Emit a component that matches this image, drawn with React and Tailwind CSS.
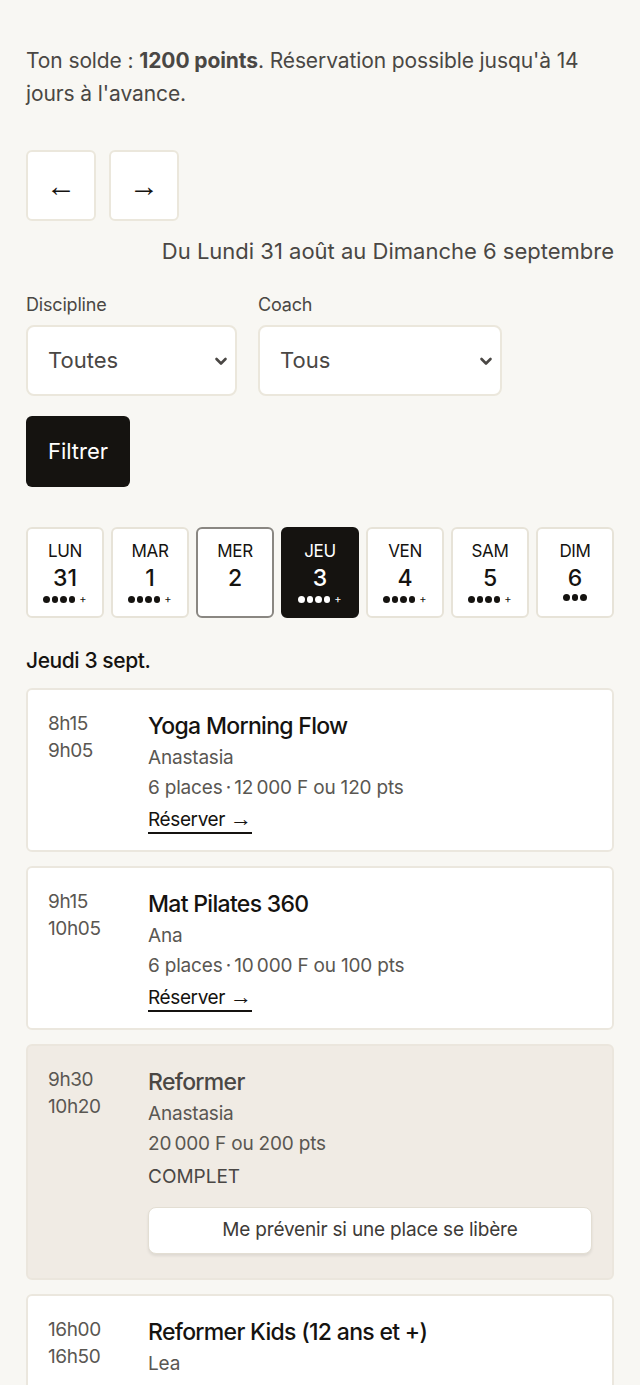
const days = [
  { d: "LUN", n: "31", dots: 4, plus: true },
  { d: "MAR", n: "1", dots: 4, plus: true },
  { d: "MER", n: "2", dots: 0, today: true },
  { d: "JEU", n: "3", dots: 4, plus: true, active: true },
  { d: "VEN", n: "4", dots: 4, plus: true },
  { d: "SAM", n: "5", dots: 4, plus: true },
  { d: "DIM", n: "6", dots: 3 },
];

const sessions = [
  { start: "8h15", end: "9h05", title: "Yoga Morning Flow", coach: "Anastasia", info: "6 places\u202f·\u202f12\u202f000 F ou 120 pts" },
  { start: "9h15", end: "10h05", title: "Mat Pilates 360", coach: "Ana", info: "6 places\u202f·\u202f10\u202f000 F ou 100 pts" },
  { start: "9h30", end: "10h20", title: "Reformer", coach: "Anastasia", info: "20\u202f000 F ou 200 pts", full: true },
  { start: "16h00", end: "16h50", title: "Reformer Kids (12 ans et +)", coach: "Lea", info: "6 places\u202f·\u202f10\u202f000 F ou 100 pts" },
];

function Chevron() {
  return (
    <svg className="w-4 h-4 text-[#4a4744]" viewBox="0 0 16 16" fill="none" stroke="currentColor" strokeWidth={2.6} strokeLinecap="round" strokeLinejoin="round">
      <path d="M3.5 6l4.5 4.5L12.5 6" />
    </svg>
  );
}

function DayTile({ day }) {
  const base = day.active
    ? "bg-[#151310] text-white border-[#151310]"
    : day.today
    ? "bg-white text-[#151310] border-[#8a8782]"
    : "bg-white text-[#151310] border-[#e7e3d8]";
  return (
    <div className={`h-[91px] rounded-md border-2 flex flex-col items-center pt-[11px] ${base}`}>
      <span className="text-[17px] leading-[22px] tracking-[-0.02em]">{day.d}</span>
      <span className="text-[23px] leading-[30px] font-medium mt-[1px]">{day.n}</span>
      {day.dots > 0 && (
        <span className="flex items-center gap-[2px] mt-[1px]">
          {Array.from({ length: day.dots }).map((_, i) => (
            <span key={i} className={`w-[6.5px] h-[6.5px] rounded-full ${day.active ? "bg-white" : "bg-[#151310]"}`} />
          ))}
          {day.plus && <span className="text-[11px] leading-none ml-[2px]">+</span>}
        </span>
      )}
    </div>
  );
}

function SessionCard({ s }) {
  return (
    <div className={`rounded-md border-2 px-[20px] pt-[20px] flex ${s.full ? "bg-[#f0ebe4] border-[#ebe6dd] pb-[24px]" : "bg-white border-[#ebe7de] pb-[15px]"}`}>
      <div className="w-[100px] shrink-0 text-[19px] leading-[27px] text-[#5a5752] tracking-[-0.02em]">
        <div>{s.start}</div>
        <div>{s.end}</div>
      </div>
      <div className="flex-1">
        <div className={`text-[23px] leading-[32px] font-medium tracking-[-0.03em] ${s.full ? "text-[#4a4744]" : "text-[#151310]"}`}>{s.title}</div>
        <div className="text-[19px] leading-[30px] text-[#5a5752] mt-[1px] tracking-[-0.01em]">{s.coach}</div>
        <div className="text-[19px] leading-[30px] text-[#5a5752] tracking-[-0.01em]">{s.info}</div>
        {s.full ? (
          <>
            <div className="text-[19px] leading-[32px] text-[#4a4744] mt-[2px]">COMPLET</div>
            <button className="mt-[14px] w-full h-[47px] rounded-lg bg-white border border-[#e3ded3] shadow-[0_2px_3px_rgba(0,0,0,0.08)] text-[19px] text-[#3e3b37] tracking-[-0.01em]">
              Me prévenir si une place se libère
            </button>
          </>
        ) : (
          <div className="mt-[2px]">
            <span className="text-[19px] leading-[30px] text-[#151310] border-b-2 border-[#151310] pb-[1px] tracking-[-0.02em]">
              Réserver <span className="font-['Liberation_Sans',sans-serif] text-[22px] leading-none">→</span>
            </span>
          </div>
        )}
      </div>
    </div>
  );
}

export default function App() {
  return (
    <div className="min-h-screen bg-[#f8f7f3] px-[26px] pt-[44px] pb-10 font-['Inter',sans-serif] text-[#4a4744]">
      <p className="text-[21px] leading-[33px] tracking-[-0.005em]">
        Ton solde : <strong className="font-bold">1200 points</strong>. Réservation possible jusqu'à 14 jours à l'avance.
      </p>

      <div className="flex gap-[13px] mt-[40px] font-['Liberation_Sans',sans-serif]">
        <button className="w-[70px] h-[71px] rounded-md bg-white border-2 border-[#ebe7dc] text-[30px] text-[#151310]">←</button>
        <button className="w-[70px] h-[71px] rounded-md bg-white border-2 border-[#ebe7dc] text-[30px] text-[#151310]">→</button>
      </div>

      <div className="text-right text-[22px] leading-[30px] mt-[15px]">Du Lundi 31 août au Dimanche 6 septembre</div>

      <div className="flex gap-[21px] mt-[27px]">
        <div>
          <div className="text-[18px] leading-[24px] mb-[8px] tracking-[-0.01em]">Discipline</div>
          <div className="w-[211px] h-[71px] rounded-lg bg-white border-2 border-[#ebe7dc] flex items-center justify-between pl-[20px] pr-[6px]">
            <span className="text-[22px] text-[#4a4744]">Toutes</span>
            <Chevron />
          </div>
        </div>
        <div>
          <div className="text-[18px] leading-[24px] mb-[8px] tracking-[-0.01em]">Coach</div>
          <div className="w-[244px] h-[71px] rounded-lg bg-white border-2 border-[#ebe7dc] flex items-center justify-between pl-[20px] pr-[6px]">
            <span className="text-[22px] text-[#4a4744]">Tous</span>
            <Chevron />
          </div>
        </div>
      </div>

      <button className="mt-[20px] w-[104px] h-[71px] rounded-md bg-[#151310] text-white text-[22px]">Filtrer</button>

      <div className="grid grid-cols-7 gap-[7px] mt-[40px]">
        {days.map((d) => (
          <DayTile key={d.d} day={d} />
        ))}
      </div>

      <div className="text-[21px] leading-[30px] text-[#151310] font-medium mt-[28px] tracking-[-0.02em]">Jeudi 3 sept.</div>

      <div className="flex flex-col gap-[14px] mt-[12px]">
        {sessions.map((s) => (
          <SessionCard key={s.title} s={s} />
        ))}
      </div>
    </div>
  );
}
